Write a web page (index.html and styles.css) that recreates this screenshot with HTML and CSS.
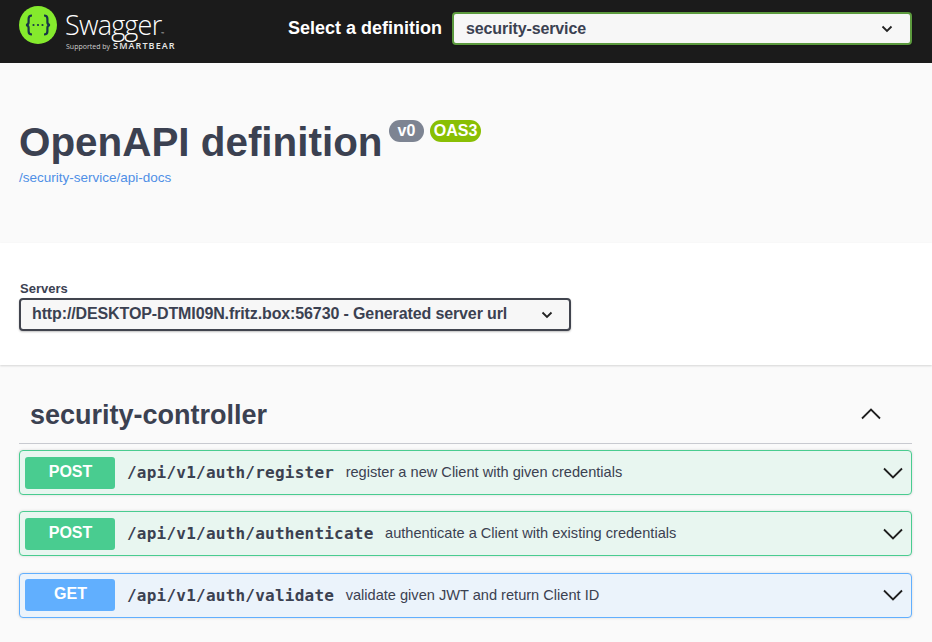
FILE: index.html
```html
<!DOCTYPE html>
<html lang="en">
<head>
<meta charset="utf-8">
<title>Swagger UI</title>
<link rel="stylesheet" href="styles.css">
</head>
<body>
<header class="topbar">
  <div class="logo">
    <svg class="logo-mark" width="38" height="38" viewBox="0 0 38 38">
      <circle cx="19" cy="19" r="19" fill="#85ea2d"/>
      <path d="M13 9.500c-2.800 0-3.400 1.300-3.400 3.300v3.400c0 1.500-.8 2.400-2.400 2.800 1.600.4 2.400 1.300 2.400 2.800v3.400c0 2 .6 3.300 3.400 3.300" fill="none" stroke="#173647" stroke-width="2.200"/>
      <path d="M25 9.500c2.800 0 3.400 1.300 3.400 3.300v3.400c0 1.500.8 2.400 2.400 2.800-1.600.4-2.400 1.300-2.400 2.800v3.400c0 2-.6 3.300-3.400 3.300" fill="none" stroke="#173647" stroke-width="2.200"/>
      <circle cx="14.500" cy="19" r="1.100" fill="#173647"/>
      <circle cx="19" cy="19" r="1.100" fill="#173647"/>
      <circle cx="23.500" cy="19" r="1.100" fill="#173647"/>
    </svg>
    <div class="wordmark">
      <div class="wordmark-name">Swagger<span class="tm">™</span></div>
      <div class="wordmark-sub"><span class="supported">Supported by</span><span class="smartbear">SMARTBEAR</span></div>
    </div>
  </div>
  <div class="definition">
    <span class="definition-label">Select a definition</span>
    <div class="select select-definition">
      <span>security-service</span>
      <svg class="select-chevron" width="12" height="8" viewBox="0 0 12 8"><path d="M1.500 1.500 6 6l4.500-4.500" fill="none" stroke="#222" stroke-width="1.800"/></svg>
    </div>
  </div>
</header>

<section class="info">
  <div class="title-row">
    <h1 class="title">OpenAPI definition</h1>
    <span class="badge badge-version">v0</span>
    <span class="badge badge-oas">OAS3</span>
  </div>
  <a class="docs-link" href="#">/security-service/api-docs</a>
</section>

<section class="servers">
  <div class="servers-label">Servers</div>
  <div class="select select-server">
    <span>http://DESKTOP-DTMI09N.fritz.box:56730 - Generated server url</span>
    <svg class="select-chevron" width="12" height="8" viewBox="0 0 12 8"><path d="M1.500 1.500 6 6l4.500-4.500" fill="none" stroke="#222" stroke-width="1.800"/></svg>
  </div>
</section>

<main class="operations">
  <div class="tag">
    <h2 class="tag-name">security-controller</h2>
    <svg class="tag-arrow" width="20" height="20" viewBox="0 0 20 20"><path d="M1 14.500 10 5.500l9 9" fill="none" stroke="#1f1f1f" stroke-width="1.800"/></svg>
  </div>
  <div class="opblock opblock-post">
    <span class="method">POST</span>
    <span class="path">/api/v1/auth/register</span>
    <span class="summary">register a new Client with given credentials</span>
    <svg class="op-arrow" width="20" height="20" viewBox="0 0 20 20"><path d="M1 5.500 10 14.500l9-9" fill="none" stroke="#1f1f1f" stroke-width="1.800"/></svg>
  </div>
  <div class="opblock opblock-post">
    <span class="method">POST</span>
    <span class="path">/api/v1/auth/authenticate</span>
    <span class="summary">authenticate a Client with existing credentials</span>
    <svg class="op-arrow" width="20" height="20" viewBox="0 0 20 20"><path d="M1 5.500 10 14.500l9-9" fill="none" stroke="#1f1f1f" stroke-width="1.800"/></svg>
  </div>
  <div class="opblock opblock-get">
    <span class="method">GET</span>
    <span class="path">/api/v1/auth/validate</span>
    <span class="summary">validate given JWT and return Client ID</span>
    <svg class="op-arrow" width="20" height="20" viewBox="0 0 20 20"><path d="M1 5.500 10 14.500l9-9" fill="none" stroke="#1f1f1f" stroke-width="1.800"/></svg>
  </div>
</main>
</body>
</html>
```
FILE: styles.css
```css
* { box-sizing: border-box; }

html, body { margin: 0; padding: 0; }

body {
  height: 642px;
  overflow: hidden;
  background: #fafafa;
  color: #3b4151;
  font-family: "Liberation Sans", Arial, sans-serif;
}

.topbar {
  display: flex;
  align-items: flex-start;
  height: 63px;
  padding: 12px 20px 0 19px;
  background: #1b1b1b;
}

.logo { display: flex; align-items: flex-start; gap: 9px; width: 269px; margin-top: -6px; }
.logo-mark { flex: none; }
.wordmark { color: #fff; }
.wordmark-name {
  height: 34px;
  margin-left: -1px;
  padding-top: 3px;
  font-family: "Open Sans", sans-serif;
  font-size: 27px;
  font-weight: 300;
  line-height: 31px;
  letter-spacing: -.8px;
}
.tm { font-size: 4px; vertical-align: baseline; letter-spacing: 0; }
.wordmark-sub { display: flex; align-items: baseline; gap: 3px; height: 12px; line-height: 12px; }
.supported { font-family: "Open Sans", sans-serif; font-size: 7px; color: #cfcfcf; }
.smartbear { font-family: "Open Sans", sans-serif; font-size: 9px; font-weight: 600; letter-spacing: 1.100px; color: #e8e8e8; }

.definition { display: flex; flex: 1; align-items: center; gap: 10px; }
.definition-label { color: #fff; font-size: 18px; font-weight: 700; white-space: nowrap; }

.select {
  display: flex;
  align-items: center;
  justify-content: space-between;
  background: #f7f7f7;
  font-size: 16px;
  font-weight: 700;
  border-radius: 4px;
  box-shadow: 0 1px 2px rgba(0, 0, 0, .25);
}
.select-definition {
  flex: 1;
  height: 33px;
  padding: 0 17px 0 12px;
  border: 2px solid #5c9a3e;
  letter-spacing: -.12px;
}
.select-server {
  width: 552px;
  height: 33px;
  padding: 0 16px 0 11px;
  border: 2px solid #41444e;
  letter-spacing: -.12px;
}
.select-server span { margin-top: -2px; }
.select-chevron { flex: none; }

.info { height: 180px; padding: 54px 19px 0; background: #fafafa; }
.title-row { display: flex; align-items: flex-start; }
.title { margin: 0; font-size: 40.400px; font-weight: 700; line-height: 50px; }
.badge {
  margin-top: 3px;
  height: 22px;
  padding: 0 9px;
  border-radius: 11px;
  color: #fff;
  font-size: 16px;
  font-weight: 700;
  line-height: 22px;
}
.badge-version { margin-left: 6px; background: #7d8492; }
.badge-oas { margin-left: 6px; padding: 0 3.500px; background: #89bf04; }
.docs-link { display: block; margin-top: 3px; color: #4f8fe6; font-size: 13.500px; line-height: 16px; text-decoration: none; }

.servers {
  height: 122px;
  padding: 37px 19px 0 19px;
  background: #fff;
  box-shadow: 0 1px 2px rgba(0, 0, 0, .15);
  position: relative;
}
.servers-label { margin-bottom: 1px; padding-left: 1px; font-size: 13px; font-weight: 700; line-height: 17px; }

.operations { padding: 0 20px 0 19px; }
.tag {
  display: flex;
  align-items: center;
  justify-content: space-between;
  height: 79px;
  padding: 20px 31px 0 11px;
  border-bottom: 1px solid #c8cad0;
}
.tag-name { margin: 2px 0 0; font-size: 27px; font-weight: 700; }
.tag-arrow { flex: none; margin-right: 0; }

.opblock {
  display: flex;
  align-items: center;
  height: 45px;
  margin-top: 6px;
  padding: 0 8px 0 5px;
  border: 1px solid;
  border-radius: 4px;
  box-shadow: 0 0 3px rgba(0, 0, 0, .15);
}
.opblock + .opblock { margin-top: 16.400px; }
.opblock-post { background: #e8f6f0; border-color: #49cc90; }
.opblock-get { background: #ebf3fb; border-color: #61affe; }
.method {
  flex: none;
  width: 90px;
  height: 32px;
  padding-left: 1px;
  border-radius: 3px;
  color: #fff;
  font-size: 16px;
  font-weight: 700;
  line-height: 30.500px;
  text-align: center;
}
.opblock-post .method { background: #49cc90; }
.opblock-get .method { background: #61affe; }
.path {
  margin-left: 12px;
  font-family: "DejaVu Sans Mono", monospace;
  font-size: 16px;
  font-weight: 700;
  letter-spacing: .23px;
}
.summary { margin: -1px 0 0 11.500px; flex: 1; color: #3b4151; font-size: 14.600px; }
.op-arrow { flex: none; }
```
